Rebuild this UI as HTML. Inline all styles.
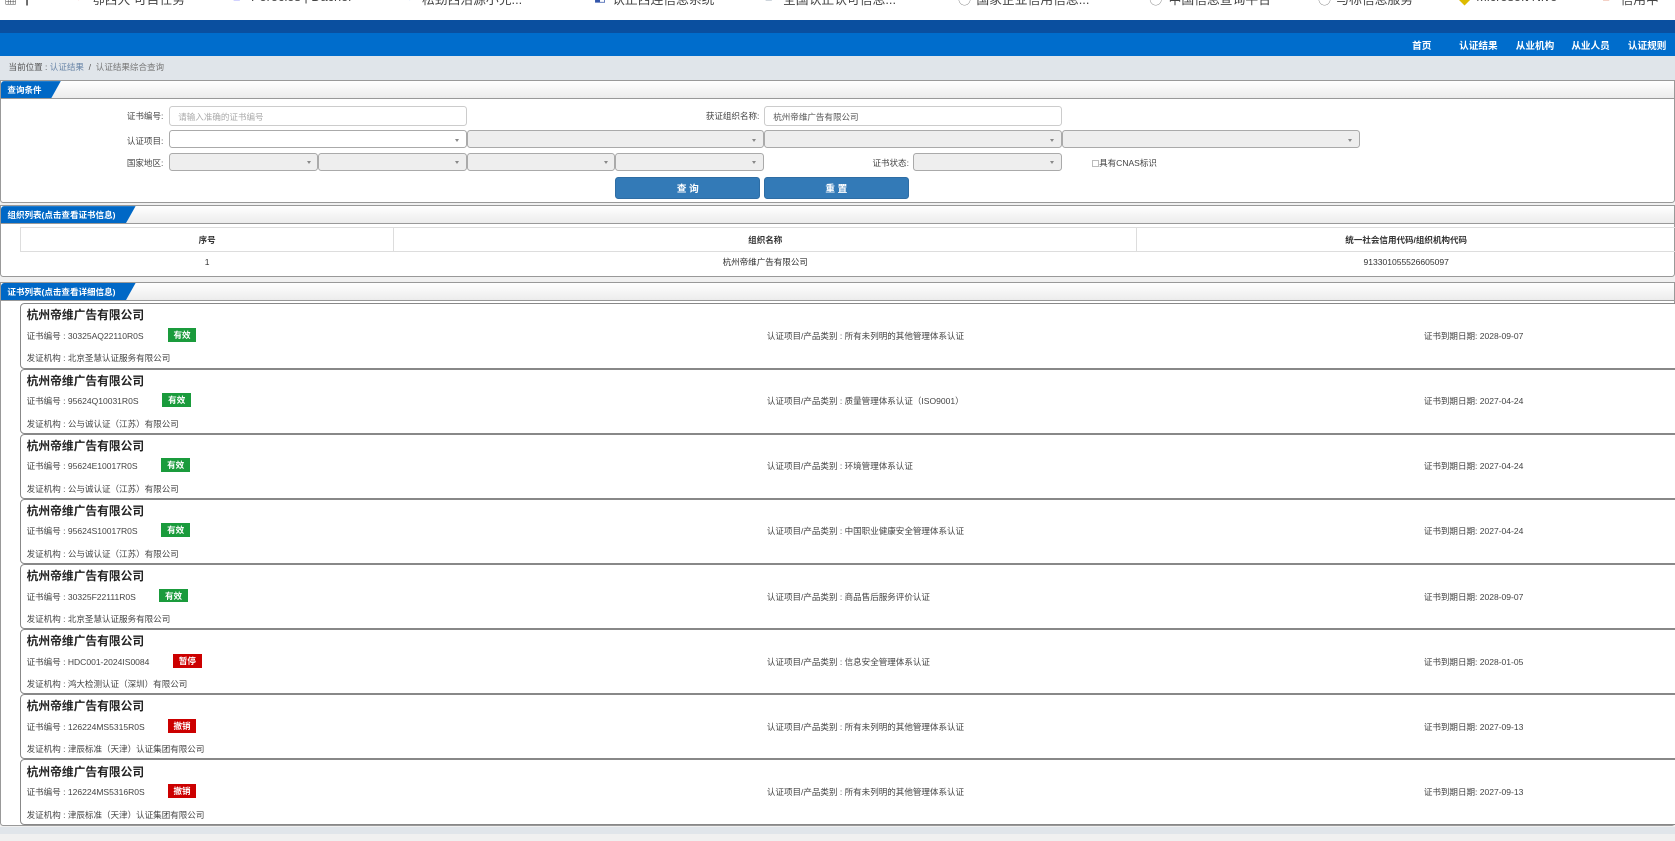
<!DOCTYPE html>
<html><head><meta charset="utf-8">
<style>
*{box-sizing:border-box;margin:0;padding:0}
html,body{width:1675px;height:841px;overflow:hidden;background:#f0f0f0}
body{font-family:"Liberation Sans","Noto Sans CJK SC",sans-serif;color:#333}
#w{zoom:1.0682;width:1568px;height:788px;position:relative;background:#f0f0f0}
.a{position:absolute}
.bm{left:0;top:0;width:1568px;height:19px;background:#fff;overflow:hidden;font-size:12px;color:#444}
.bm span{position:absolute;top:-10px;white-space:nowrap}
.dark{left:0;top:19px;width:1568px;height:12px;background:#0a4f9f}
.nav{left:0;top:31px;width:1568px;height:21px;background:#006dcc}
.nav span{position:absolute;top:5px;color:#fff;font-size:9px;font-weight:bold}
.bc{left:0;top:52px;width:1568px;height:23px;background:#e0e5ea;font-size:8px;color:#555;padding:5px 0 0 8px}
.bc i{font-style:normal;color:#6a86a8}
.panel{left:0;width:1568px;background:#fff;border:1px solid #999;border-radius:0 0 3px 3px}
.ph{position:absolute;left:0;top:0;width:100%;height:17px;background:linear-gradient(#fff,#ececec);border-bottom:1px solid #999}
.tab{position:absolute;left:0;top:0;height:16px;background:#0068c6;color:#fff;font-size:8px;font-weight:bold;padding:3px 0 0 6px;clip-path:polygon(0 0,100% 0,calc(100% - 9px) 100%,0 100%);border-radius:3px 0 0 0}
.lbl{position:absolute;font-size:8px;color:#444;text-align:right}
.in{position:absolute;border:1px solid #ccc;border-radius:3px;background:#fff;font-size:8px;color:#555;padding:4px 8px;height:19px}
.sel{position:absolute;border:1px solid #aaa;border-radius:3px;background:#eee;height:17px}
.sel:after{content:"";position:absolute;right:6px;top:7px;border-left:2px solid transparent;border-right:2px solid transparent;border-top:3px solid #888}
.btn{position:absolute;background:#337ab7;border:1px solid #2e6da4;border-radius:3px;color:#fff;font-size:9px;font-weight:bold;text-align:center;padding-top:3px;height:20px;width:136px}
table{border-collapse:collapse;font-size:8px}
.card{position:absolute;left:19px;width:1552px;height:61px;border:1px solid #888;border-radius:4px 0 0 4px;background:#fff}
.card b.t{position:absolute;left:5px;top:2px;font-size:11px;color:#222}
.card .l1{position:absolute;left:5px;top:24px;font-size:8px;color:#444;white-space:nowrap}
.card .l2{position:absolute;left:5px;top:45px;font-size:8px;color:#444;white-space:nowrap}
.card .m{position:absolute;left:698px;top:24px;font-size:8px;color:#444}
.card .r{position:absolute;left:1313px;top:24px;font-size:8px;color:#444}
.bd{position:absolute;top:22px;width:27px;height:13px;color:#fff;font-size:8px;font-weight:bold;text-align:center;padding-top:1px}
.g{background:#1a9b3c}.rd{background:#cc0000}
</style></head><body><div id="w">
<div class="a bm"><span style="left:4px">▦ ┃</span><span style="left:70px;color:#d22">●</span><span style="left:86px">鄂西大 可目任务</span><span style="left:218px;color:#33f">■</span><span style="left:235px">Poroclos | Dacnor</span><span style="left:380px;color:#27e">●</span><span style="left:395px">松劲西沿源小兑...</span><span style="left:556px;color:#35a">◧</span><span style="left:573px">认正西连信息系统</span><span style="left:716px;color:#246">■</span><span style="left:733px">全国认正认可信息...</span><span style="left:897px;color:#777">◯</span><span style="left:914px">国家企业信用信息...</span><span style="left:1076px;color:#777">◯</span><span style="left:1094px">中国信息查询平台</span><span style="left:1234px;color:#777">◯</span><span style="left:1251px">与标信息服务</span><span style="left:1365px;color:#db0">◆</span><span style="left:1382px">Microsoft Nivo</span><span style="left:1500px;color:#c30">■</span><span style="left:1517px">信用中</span></div>
<div class="a dark"></div>
<div class="a nav"><span style="left:1322px">首页</span><span style="left:1366px">认证结果</span><span style="left:1419px">从业机构</span><span style="left:1471px">从业人员</span><span style="left:1524px">认证规则</span></div>
<div class="a bc">当前位置 : <i>认证结果</i> &nbsp;/&nbsp; <i style="color:#777">认证结果综合查询</i></div>

<div class="a panel" style="top:75px;height:115px">
<div class="ph"><div class="tab" style="width:56px">查询条件</div></div>
<div class="lbl" style="left:90px;top:27px;width:62px">证书编号:</div>
<div class="in" style="left:157px;top:23px;width:279px;color:#aaa">请输入准确的证书编号</div>
<div class="lbl" style="left:620px;top:27px;width:90px">获证组织名称:</div>
<div class="in" style="left:714px;top:23px;width:279px">杭州帝维广告有限公司</div>
<div class="lbl" style="left:90px;top:50px;width:62px">认证项目:</div>
<div class="sel" style="left:157px;top:46px;width:279px;background:#fff"></div>
<div class="sel" style="left:436px;top:46px;width:278px"></div>
<div class="sel" style="left:714px;top:46px;width:279px"></div>
<div class="sel" style="left:993px;top:46px;width:279px"></div>
<div class="lbl" style="left:90px;top:71px;width:62px">国家地区:</div>
<div class="sel" style="left:157px;top:67px;width:140px"></div>
<div class="sel" style="left:297px;top:67px;width:139px"></div>
<div class="sel" style="left:436px;top:67px;width:139px"></div>
<div class="sel" style="left:575px;top:67px;width:139px"></div>
<div class="lbl" style="left:780px;top:71px;width:70px">证书状态:</div>
<div class="sel" style="left:854px;top:67px;width:139px"></div>
<div class="lbl" style="left:1021px;top:71px;text-align:left;white-space:nowrap"><span style="display:inline-block;width:7px;height:7px;border:1px solid #bbb;vertical-align:-1px"></span>具有CNAS标识</div>
<div class="btn" style="left:575px;top:90px">查 询</div>
<div class="btn" style="left:714px;top:90px">重 置</div>
</div>

<div class="a panel" style="top:192px;height:67px">
<div class="ph"><div class="tab" style="width:126px">组织列表(点击查看证书信息)</div></div>
<table class="a" style="left:18px;top:20px;width:1550px">
<tr style="height:22px;font-weight:bold"><td style="border:1px solid #ddd;width:349px;text-align:center">序号</td><td style="border:1px solid #ddd;width:696px;text-align:center">组织名称</td><td style="border:1px solid #ddd;text-align:center">统一社会信用代码/组织机构代码</td></tr>
<tr style="height:19px"><td style="text-align:center">1</td><td style="text-align:center">杭州帝维广告有限公司</td><td style="text-align:center">913301055526605097</td></tr>
</table>
</div>

<div class="a panel" style="top:264px;height:509px">
<div class="ph"><div class="tab" style="width:126px">证书列表(点击查看详细信息)</div></div>
</div>

<div class="card" style="top:284px"><b class="t">杭州帝维广告有限公司</b><div class="l1">证书编号 : 30325AQ22110R0S</div><div class="bd g" style="left:137px">有效</div><div class="l2">发证机构 : 北京圣慧认证服务有限公司</div><div class="m">认证项目/产品类别 : 所有未列明的其他管理体系认证</div><div class="r">证书到期日期: 2028-09-07</div></div>
<div class="card" style="top:345px"><b class="t">杭州帝维广告有限公司</b><div class="l1">证书编号 : 95624Q10031R0S</div><div class="bd g" style="left:132px">有效</div><div class="l2">发证机构 : 公与诚认证（江苏）有限公司</div><div class="m">认证项目/产品类别 : 质量管理体系认证（ISO9001）</div><div class="r">证书到期日期: 2027-04-24</div></div>
<div class="card" style="top:406px"><b class="t">杭州帝维广告有限公司</b><div class="l1">证书编号 : 95624E10017R0S</div><div class="bd g" style="left:131px">有效</div><div class="l2">发证机构 : 公与诚认证（江苏）有限公司</div><div class="m">认证项目/产品类别 : 环境管理体系认证</div><div class="r">证书到期日期: 2027-04-24</div></div>
<div class="card" style="top:467px"><b class="t">杭州帝维广告有限公司</b><div class="l1">证书编号 : 95624S10017R0S</div><div class="bd g" style="left:131px">有效</div><div class="l2">发证机构 : 公与诚认证（江苏）有限公司</div><div class="m">认证项目/产品类别 : 中国职业健康安全管理体系认证</div><div class="r">证书到期日期: 2027-04-24</div></div>
<div class="card" style="top:528px"><b class="t">杭州帝维广告有限公司</b><div class="l1">证书编号 : 30325F22111R0S</div><div class="bd g" style="left:129px">有效</div><div class="l2">发证机构 : 北京圣慧认证服务有限公司</div><div class="m">认证项目/产品类别 : 商品售后服务评价认证</div><div class="r">证书到期日期: 2028-09-07</div></div>
<div class="card" style="top:589px"><b class="t">杭州帝维广告有限公司</b><div class="l1">证书编号 : HDC001-2024IS0084</div><div class="bd rd" style="left:142px">暂停</div><div class="l2">发证机构 : 鸿大检测认证（深圳）有限公司</div><div class="m">认证项目/产品类别 : 信息安全管理体系认证</div><div class="r">证书到期日期: 2028-01-05</div></div>
<div class="card" style="top:650px"><b class="t">杭州帝维广告有限公司</b><div class="l1">证书编号 : 126224MS5315R0S</div><div class="bd rd" style="left:137px">撤销</div><div class="l2">发证机构 : 津辰标准（天津）认证集团有限公司</div><div class="m">认证项目/产品类别 : 所有未列明的其他管理体系认证</div><div class="r">证书到期日期: 2027-09-13</div></div>
<div class="card" style="top:711px"><b class="t">杭州帝维广告有限公司</b><div class="l1">证书编号 : 126224MS5316R0S</div><div class="bd rd" style="left:137px">撤销</div><div class="l2">发证机构 : 津辰标准（天津）认证集团有限公司</div><div class="m">认证项目/产品类别 : 所有未列明的其他管理体系认证</div><div class="r">证书到期日期: 2027-09-13</div></div>
<div class="a" style="left:0;top:774px;width:1568px;height:7px;background:#e0e5ea"></div>
</div></body></html>
